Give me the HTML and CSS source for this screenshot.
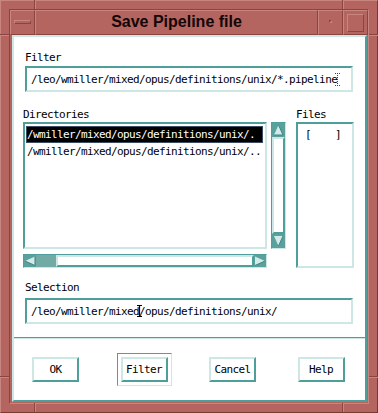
FILE: index.html
```html
<!DOCTYPE html>
<html lang="en">
<head>
    <meta charset="UTF-8">
    <title>Save Pipeline file</title>
    <link rel="stylesheet" href="styles.css">
</head>
<body>
    <div class="window">
        <!-- Resize notches in the frame -->
        <span class="notch-v" style="left: 33px; top: -1px;"></span>
        <span class="notch-v" style="left: 341px; top: -1px;"></span>
        <span class="notch-v" style="left: 33px; top: 402px;"></span>
        <span class="notch-v" style="left: 341px; top: 402px;"></span>
        <span class="notch-h" style="left: -1px; top: 33px;"></span>
        <span class="notch-h" style="left: 368px; top: 33px;"></span>
        <span class="notch-h" style="left: -1px; top: 375px;"></span>
        <span class="notch-h" style="left: 368px; top: 375px;"></span>

        <div class="window-inner">
            <!-- Title bar -->
            <div class="titlebar">
                <div class="tb-btn"><span class="menu-bar"></span></div>
                <div class="title">Save Pipeline file</div>
                <div class="tb-btn"><span class="min-dot"></span></div>
                <div class="tb-btn"><span class="max-square"></span></div>
            </div>

            <!-- Dialog body -->
            <div class="panel">
                <div class="work">
                    <div class="label">Filter</div>
                    <div class="field">/leo/wmiller/mixed/opus/definitions/unix/*.pipeline<span class="caret"><svg width="5" height="13" viewBox="0 0 5 13"><path d="M0 0.5H5M2.5 0V13M0 12.5H5" stroke="#444" stroke-width="1" stroke-dasharray="1 1" fill="none"/></svg></span></div>

                    <div class="lists">
                        <div class="dir-col">
                            <div class="label">Directories</div>
                            <div class="dir-row">
                                <div class="listbox dir-list">
                                    <div class="item selected">/wmiller/mixed/opus/definitions/unix/.</div>
                                    <div class="item">/wmiller/mixed/opus/definitions/unix/..</div>
                                </div>
                                <div class="vscroll">
                                    <svg class="arrow" width="13" height="14" viewBox="0 0 13 14">
                                        <rect width="13" height="14" fill="#5aa19d"/>
                                        <polygon points="6.5,2 11,12 2,12" fill="#d3eae8"/>
                                        <path d="M6.5 2L11 12H2" stroke="#3d8783" fill="none"/>
                                    </svg>
                                    <div class="vthumb"></div>
                                    <svg class="arrow" width="13" height="14" viewBox="0 0 13 14">
                                        <rect width="13" height="14" fill="#5aa19d"/>
                                        <polygon points="2,2 11,2 6.5,12" fill="#d3eae8"/>
                                        <path d="M11 2L6.5 12" stroke="#3d8783" fill="none"/>
                                    </svg>
                                </div>
                            </div>
                            <div class="hscroll">
                                <svg class="arrow" width="12" height="12" viewBox="0 0 12 12">
                                    <rect width="12" height="12" fill="#5aa19d"/>
                                    <polygon points="1,6 11,1.5 11,10.5" fill="#d3eae8"/>
                                    <path d="M1 6L11 10.5V1.5" stroke="#3d8783" fill="none"/>
                                </svg>
                                <div class="htrough"></div>
                                <div class="hthumb"></div>
                                <svg class="arrow" width="12" height="12" viewBox="0 0 12 12">
                                    <rect width="12" height="12" fill="#5aa19d"/>
                                    <polygon points="11,6 1,1.5 1,10.5" fill="#d3eae8"/>
                                    <path d="M11 6L1 10.5" stroke="#3d8783" fill="none"/>
                                </svg>
                            </div>
                        </div>
                        <div class="file-col">
                            <div class="label">Files</div>
                            <div class="listbox file-list">
                                <div class="item">[    ]</div>
                            </div>
                        </div>
                    </div>

                    <div class="label selection-label">Selection</div>
                    <div class="field">/leo/wmiller/mixed<span class="caret"><svg width="5" height="12" viewBox="0 0 5 12"><path d="M0 0.5H5M2.5 0V12M0 11.5H5" stroke="#000" stroke-width="1.2" fill="none"/></svg></span>/opus/definitions/unix/</div>
                </div>

                <div class="separator"></div>

                <!-- Action buttons -->
                <div class="buttons">
                    <div class="slot"><div class="button">OK</div></div>
                    <div class="slot default"><div class="button">Filter</div></div>
                    <div class="slot"><div class="button">Cancel</div></div>
                    <div class="slot"><div class="button">Help</div></div>
                </div>
            </div>
        </div>
    </div>
</body>
</html>
```

FILE: styles.css
```css
/* Colours of the Motif look */
:root {
    --frame: #b5655f;
    --frame-light: #c98680;
    --frame-dark: #8a4540;
    --teal: #4e9e99;
    --teal-light: #cde7e5;
    --trough: #72aaa6;
}

body {
    margin: 0;
    background: #ffffff;
}

/* Window frame */
.window {
    position: relative;
    width: 378px;
    height: 413px;
    box-sizing: border-box;
    background: var(--frame);
    border: 1px solid;
    border-color: var(--frame-light) #7a3833 #7a3833 var(--frame-light);
    padding: 8px;
    font-family: "DejaVu Sans Mono", monospace;
    color: #000;
}

.window-inner {
    height: 100%;
    box-sizing: border-box;
    border: 1px solid;
    border-color: var(--frame-dark) var(--frame-light) var(--frame-light) var(--frame-dark);
    display: flex;
    flex-direction: column;
}

.notch-v {
    position: absolute;
    width: 0;
    height: 9px;
    border-left: 1px solid var(--frame-dark);
    border-right: 1px solid var(--frame-light);
}

.notch-h {
    position: absolute;
    width: 9px;
    height: 0;
    border-top: 1px solid var(--frame-dark);
    border-bottom: 1px solid var(--frame-light);
}

/* Title bar */
.titlebar {
    display: flex;
    height: 25px;
    flex-shrink: 0;
}

.tb-btn,
.title {
    box-sizing: border-box;
    border: 1px solid;
    border-color: var(--frame-light) var(--frame-dark) var(--frame-dark) var(--frame-light);
}

.tb-btn {
    width: 25px;
    display: flex;
    align-items: center;
    justify-content: center;
}

.title {
    flex: 1;
    text-align: center;
    font-family: "Liberation Sans", Arial, sans-serif;
    font-weight: bold;
    font-size: 16px;
    line-height: 21px;
    color: #120606;
}

.menu-bar {
    width: 17px;
    height: 4px;
    box-sizing: border-box;
    border: 1px solid;
    border-color: var(--frame-light) var(--frame-dark) var(--frame-dark) var(--frame-light);
    margin-top: -2px;
}

.min-dot {
    width: 3px;
    height: 3px;
    box-sizing: border-box;
    border: 1px solid;
    border-color: var(--frame-dark) var(--frame-light) var(--frame-light) var(--frame-dark);
    margin-top: -2px;
}

.max-square {
    width: 17px;
    height: 18px;
    box-sizing: border-box;
    border: 1px solid;
    border-color: var(--frame-light) var(--frame-dark) var(--frame-dark) var(--frame-light);
}

/* Dialog panel */
.panel {
    flex: 1;
    margin: 0 1px 1px 2px;
    border: 2px solid;
    border-color: var(--teal-light) var(--teal) var(--teal) var(--teal-light);
    background: #ffffff;
    display: flex;
    flex-direction: column;
}

.work {
    padding: 14px 12px 0 11px;
}

.label {
    font-size: 11px;
    line-height: 13px;
    height: 13px;
    letter-spacing: -0.62px;
    white-space: pre;
}

.field {
    margin-top: 2px;
    height: 26px;
    box-sizing: border-box;
    border: 2px solid;
    border-color: var(--teal) var(--teal-light) var(--teal-light) var(--teal);
    padding: 5px 4px 4px 4px;
    font-size: 11px;
    line-height: 13px;
    letter-spacing: -0.62px;
    white-space: pre;
    overflow: hidden;
}

.caret {
    position: relative;
    display: inline-block;
    width: 0;
    height: 13px;
    vertical-align: top;
}

.caret svg {
    position: absolute;
    left: -2.5px;
    top: 0;
}

/* Directory and file lists */
.lists {
    display: flex;
    margin-top: 16px;
    margin-right: -1px;
}

.dir-col {
    margin-left: -2px;
    width: 263px;
}

.dir-row {
    display: flex;
    gap: 4px;
    margin-top: 1px;
    height: 127px;
}

.listbox {
    box-sizing: border-box;
    border: 2px solid;
    border-color: var(--teal) var(--teal-light) var(--teal-light) var(--teal);
    padding: 2px 2px 2px 1px;
    overflow: hidden;
}

.dir-list {
    width: 244px;
}

.item {
    height: 17px;
    box-sizing: border-box;
    border: 1px solid transparent;
    padding: 1px 0;
    font-size: 11px;
    line-height: 13px;
    letter-spacing: -0.62px;
    white-space: pre;
    overflow: hidden;
}

.item.selected {
    background: #000;
    color: #fff;
    border-color: #3a4d63;
}

.vscroll {
    width: 15px;
    box-sizing: border-box;
    border: 1px solid;
    border-color: var(--teal) var(--teal-light) var(--teal-light) var(--teal);
    background: var(--trough);
    display: flex;
    flex-direction: column;
}

.arrow {
    display: block;
    flex-shrink: 0;
}

.vthumb {
    flex: 1;
    box-sizing: border-box;
    border: 2px solid;
    border-color: var(--teal-light) var(--teal) var(--teal) var(--teal-light);
    background: #fff;
}

.hscroll {
    margin-top: 5px;
    width: 244px;
    height: 14px;
    box-sizing: border-box;
    border: 1px solid;
    border-color: var(--teal) var(--teal-light) var(--teal-light) var(--teal);
    background: var(--trough);
    display: flex;
}

.htrough {
    width: 20px;
}

.hthumb {
    flex: 1;
    box-sizing: border-box;
    border: 2px solid;
    border-color: var(--teal-light) var(--teal) var(--teal) var(--teal-light);
    background: #fff;
}

.file-col {
    margin-left: 10px;
    width: 58px;
}

.file-list {
    margin-top: 1px;
    height: 146px;
    padding-left: 6px;
}

.selection-label {
    margin-top: 13px;
}

.selection-label + .field {
    margin-top: 4px;
}

/* Separator and buttons */
.separator {
    margin-top: 13px;
    border-top: 1px solid var(--teal);
    border-bottom: 1px solid var(--teal-light);
}

.buttons {
    display: flex;
    gap: 33.5px;
    padding: 14px 0 0 14px;
}

.slot {
    border: 1px solid transparent;
    padding: 3px;
}

.slot.default {
    border-color: var(--teal) var(--teal-light) var(--teal-light) var(--teal);
}

.button {
    width: 47px;
    height: 25px;
    box-sizing: border-box;
    border: 2px solid;
    border-color: var(--teal-light) var(--teal) var(--teal) var(--teal-light);
    background: #fff;
    padding: 4px 0;
    text-align: center;
    font-size: 11px;
    line-height: 13px;
    letter-spacing: -0.62px;
}
```
